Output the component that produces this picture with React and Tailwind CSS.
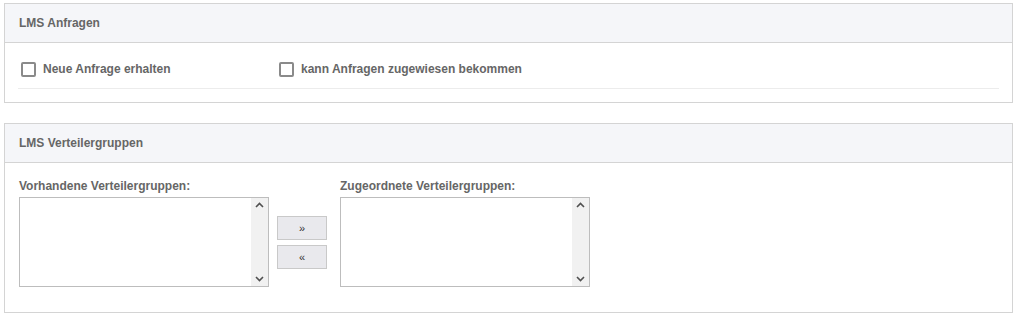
export default function App() {
    const font = { fontFamily: '"Liberation Sans", Arial, sans-serif' }

    const Checkbox = ({ label }) => (
        <label className="flex items-center gap-[7px] text-[12px] font-bold text-[#666]">
            <span className="block w-[15px] h-[15px] border-2 border-[#8a8a8a] rounded-[2px] bg-white" />
            {label}
        </label>
    )

    const ListBox = () => (
        <div className="flex w-[250px] h-[90px] border border-[#bdbdbd] bg-white">
            <div className="flex-1" />
            <div className="w-[17px] bg-[#f1f1f1] flex flex-col items-center justify-between py-[4px]">
                <svg width="9" height="6" viewBox="0 0 9 6">
                    <path d="M1 5 L4.5 1.5 L8 5" fill="none" stroke="#505050" strokeWidth="1.6" />
                </svg>
                <svg width="9" height="6" viewBox="0 0 9 6">
                    <path d="M1 1 L4.5 4.5 L8 1" fill="none" stroke="#505050" strokeWidth="1.6" />
                </svg>
            </div>
        </div>
    )

    return (
        <div className="bg-white min-h-[318px] pl-[4px] pr-[5px] pt-[3px]" style={font}>
            <div className="border border-[#d4d4d4]">
                <div className="h-[39px] bg-[#f5f6f9] border-b border-[#d4d4d4] flex items-center px-[14px] text-[12px] font-bold text-[#666]">
                    LMS Anfragen
                </div>
                <div className="px-[13px] pt-[17px] pb-[13px]">
                    <div className="flex items-center pl-[3px] pb-[10px] border-b border-[#ececec]">
                        <div className="w-[258px]"><Checkbox label="Neue Anfrage erhalten" /></div>
                        <Checkbox label="kann Anfragen zugewiesen bekommen" />
                    </div>
                </div>
            </div>

            <div className="border border-[#d4d4d4] mt-[20px]">
                <div className="h-[39px] bg-[#f5f6f9] border-b border-[#d4d4d4] flex items-center px-[14px] text-[12px] font-bold text-[#666]">
                    LMS Verteilergruppen
                </div>
                <div className="px-[14px] pt-[16px] pb-[25px] flex items-start">
                    <div>
                        <div className="text-[12px] font-bold text-[#666] leading-[14px] mb-[4px]">Vorhandene Verteilergruppen:</div>
                        <ListBox />
                    </div>
                    <div className="flex flex-col gap-[5px] mt-[37px] ml-[8px] mr-[13px]">
                        <button className="w-[50px] h-[24px] bg-[#e9e9ed] border border-[#c9c9c9] text-[11px] text-[#333]">»</button>
                        <button className="w-[50px] h-[24px] bg-[#e9e9ed] border border-[#c9c9c9] text-[11px] text-[#333]">«</button>
                    </div>
                    <div>
                        <div className="text-[12px] font-bold text-[#666] leading-[14px] mb-[4px]">Zugeordnete Verteilergruppen:</div>
                        <ListBox />
                    </div>
                </div>
            </div>
        </div>
    )
}
